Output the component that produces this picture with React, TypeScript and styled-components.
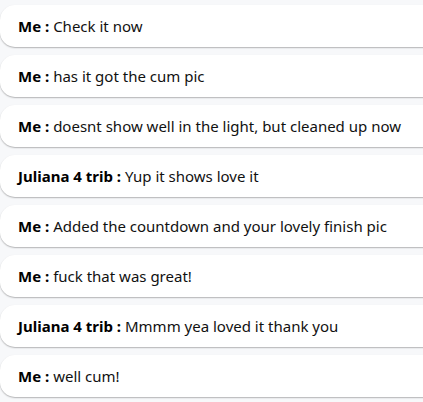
import React from 'react';
import styled, { createGlobalStyle } from 'styled-components';

const GlobalStyle = createGlobalStyle`
  html, body {
    margin: 0;
    padding: 0;
    background: #f7f8fa;
    overflow: hidden;
  }
  body {
    font-family: "Noto Sans", "Open Sans", sans-serif;
  }
`;

type Message = { from: string; text: string };

const messages: Message[] = [
  { from: 'Me', text: 'Check it now' },
  { from: 'Me', text: 'has it got the cum pic' },
  { from: 'Me', text: 'doesnt show well in the light, but cleaned up now' },
  { from: 'Juliana 4 trib', text: 'Yup it shows love it' },
  { from: 'Me', text: 'Added the countdown and your lovely finish pic' },
  { from: 'Me', text: 'fuck that was great!' },
  { from: 'Juliana 4 trib', text: 'Mmmm yea loved it thank you' },
  { from: 'Me', text: 'well cum!' },
];

const App: React.FC = () => {
  return (
    <>
      <GlobalStyle />
      <List>
        {messages.map((m, i) => (
          <Bubble key={i}>
            <Sender>{m.from} :</Sender> {m.text}
          </Bubble>
        ))}
      </List>
    </>
  );
};

const List = styled.div`
  display: flex;
  flex-direction: column;
  gap: 8px;
  padding: 5px 0 8px;
  width: 423px;
  overflow: hidden;
`;

const Bubble = styled.div`
  flex: none;
  white-space: nowrap;
  height: 42px;
  line-height: 42px;
  box-sizing: border-box;
  width: calc(100% + 30px);
  padding-left: 18px;
  background: #ffffff;
  border-radius: 15px;
  box-shadow: 0 1px 1.5px rgba(0, 0, 0, 0.28);
  font-size: 15px;
  color: #111;
`;

const Sender = styled.b`
  font-weight: 700;
  color: #000;
`;

export default App;
